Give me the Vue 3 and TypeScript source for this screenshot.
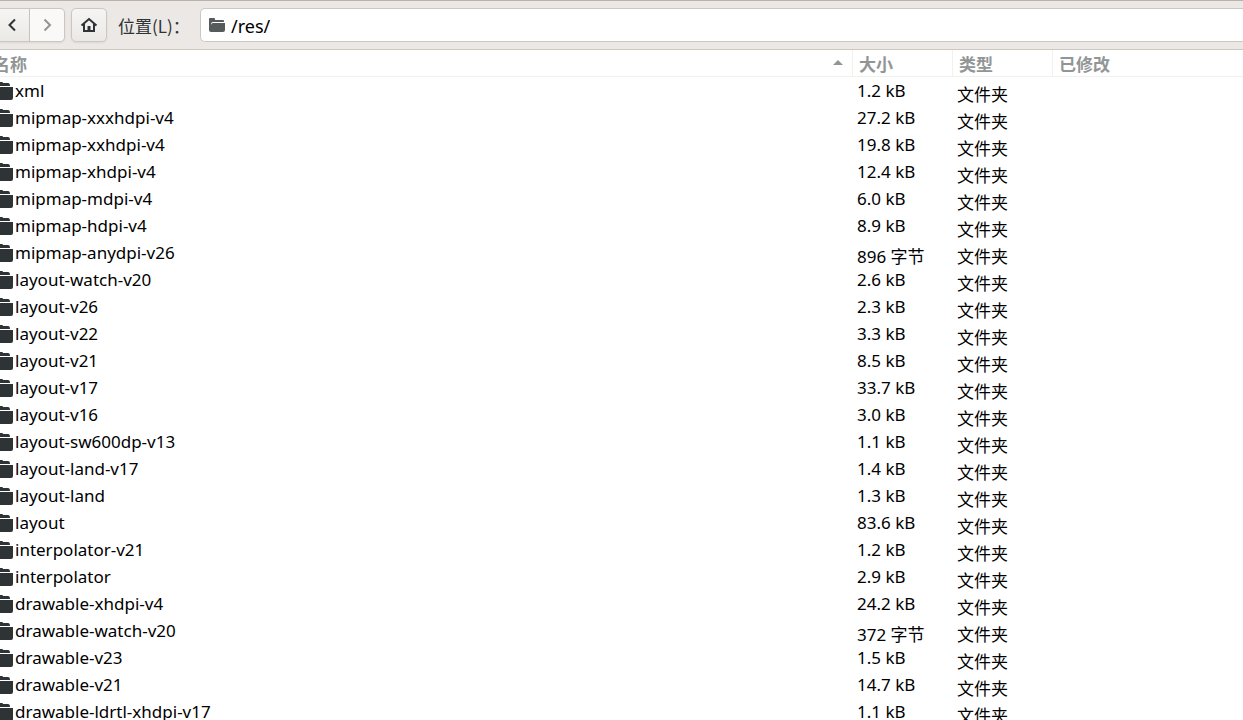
<script setup lang="ts">
import { ref } from 'vue'

interface Entry {
  name: string
  size: string
}

const location = ref('/res/')

const entries: Entry[] = [
  { name: 'xml', size: '1.2 kB' },
  { name: 'mipmap-xxxhdpi-v4', size: '27.2 kB' },
  { name: 'mipmap-xxhdpi-v4', size: '19.8 kB' },
  { name: 'mipmap-xhdpi-v4', size: '12.4 kB' },
  { name: 'mipmap-mdpi-v4', size: '6.0 kB' },
  { name: 'mipmap-hdpi-v4', size: '8.9 kB' },
  { name: 'mipmap-anydpi-v26', size: '896 字节' },
  { name: 'layout-watch-v20', size: '2.6 kB' },
  { name: 'layout-v26', size: '2.3 kB' },
  { name: 'layout-v22', size: '3.3 kB' },
  { name: 'layout-v21', size: '8.5 kB' },
  { name: 'layout-v17', size: '33.7 kB' },
  { name: 'layout-v16', size: '3.0 kB' },
  { name: 'layout-sw600dp-v13', size: '1.1 kB' },
  { name: 'layout-land-v17', size: '1.4 kB' },
  { name: 'layout-land', size: '1.3 kB' },
  { name: 'layout', size: '83.6 kB' },
  { name: 'interpolator-v21', size: '1.2 kB' },
  { name: 'interpolator', size: '2.9 kB' },
  { name: 'drawable-xhdpi-v4', size: '24.2 kB' },
  { name: 'drawable-watch-v20', size: '372 字节' },
  { name: 'drawable-v23', size: '1.5 kB' },
  { name: 'drawable-v21', size: '14.7 kB' },
  { name: 'drawable-ldrtl-xhdpi-v17', size: '1.1 kB' },
]
</script>

<template>
  <div class="window">
    <header class="toolbar">
      <div class="history">
        <button type="button" class="back" aria-label="后退">
          <svg width="16" height="16" viewBox="0 0 16 16"><path d="M11 2.500 5.500 8l5.500 5.500" /></svg>
        </button>
        <button type="button" class="forward" aria-label="前进" disabled>
          <svg width="16" height="16" viewBox="0 0 16 16"><path d="M5.500 2.500 11 8l-5.500 5.500" /></svg>
        </button>
      </div>
      <button type="button" class="home" aria-label="主目录">
        <svg width="18" height="16" viewBox="0 0 18 16">
          <path d="M1.500 8.500 9 2l7.500 6.500M4 7v7h10V7" />
          <path class="solid" d="M7.500 9h3v5h-3z" />
        </svg>
      </button>
      <label class="location-label" for="location">位置(L)：</label>
      <div class="location">
        <svg width="16" height="14" viewBox="0 0 16 14">
          <path d="M1 0h4q1 0 1 1v1h8q1 0 1 1v1H4Q2 4 2 6v8q-2 0-2-2V1q0-1 1-1z" />
          <path d="M4 5h12v7q0 2-2 2H2V6.500Q2.500 5 4 5z" />
        </svg>
        <input id="location" v-model="location" type="text" />
      </div>
    </header>

    <main class="listing">
      <table>
        <colgroup>
          <col />
          <col class="col-size" />
          <col class="col-type" />
          <col class="col-modified" />
        </colgroup>
        <thead>
          <tr>
            <th scope="col" aria-sort="ascending">
              <div class="name-heading">
                <span>名称</span>
                <svg width="10" height="5" viewBox="0 0 10 5"><path d="M5 0l5 5H0z" /></svg>
              </div>
            </th>
            <th scope="col">大小</th>
            <th scope="col">类型</th>
            <th scope="col">已修改</th>
          </tr>
        </thead>
        <tbody>
          <tr v-for="entry in entries" :key="entry.name">
            <td>
              <div class="name">
                <span class="folder">
                  <svg width="18" height="18" viewBox="0 0 18 18">
                    <path d="M3 0h4q1 0 1 1h5q2 0 2 3H1V2q0-2 2-2z" />
                    <path d="M0 5h18v11q0 2-2 2H2q-2 0-2-2z" />
                  </svg>
                </span>
                <span>{{ entry.name }}</span>
              </div>
            </td>
            <td :class="{ lowered: entry.size.endsWith('字节') }">{{ entry.size }}</td>
            <td class="lowered">文件夹</td>
            <td></td>
          </tr>
        </tbody>
      </table>
    </main>
  </div>
</template>

<style>
body {
  margin: 0;
  overflow: hidden;
}
</style>

<style scoped>
.window {
  height: 100vh;
  overflow: hidden;
  background: #fff;
  color: #000;
  font-family: "Noto Sans", "Noto Sans CJK SC", sans-serif;
  font-size: 17px;
}
.toolbar {
  display: flex;
  align-items: center;
  box-sizing: border-box;
  height: 50px;
  padding-bottom: 1px;
  border-top: 1px solid #bdb1a9;
  border-bottom: 1px solid #cdc7c2;
  background: #ebe8e5;
}
.toolbar button {
  display: flex;
  align-items: center;
  justify-content: center;
  box-sizing: border-box;
  height: 34px;
  padding: 0;
  border: 1px solid #cdc7c2;
  background: linear-gradient(#f6f5f3, #ebe9e6);
  box-shadow: 0 1px 2px rgba(0, 0, 0, 0.08);
}
.toolbar button path {
  fill: none;
  stroke: #2e3436;
  stroke-width: 2;
}
.toolbar button .solid {
  fill: #2e3436;
  stroke: none;
}
.history {
  display: flex;
}
.toolbar .back {
  width: 30px;
  padding-right: 6px;
  border-left: 0;
}
.toolbar .forward {
  width: 35px;
  border-left: 0;
  border-radius: 0 5px 5px 0;
  background: #faf9f8;
}
.toolbar .forward path {
  stroke: #929595;
}
.toolbar .home {
  width: 36px;
  margin-left: 6px;
  border-radius: 5px;
}
.location-label {
  flex: none;
  width: 82px;
  padding-top: 2px;
  margin-left: 11px;
  color: #2e3436;
  font-family: "Noto Sans CJK SC", sans-serif;
  line-height: 34px;
  white-space: nowrap;
}
.location {
  display: flex;
  flex: 1;
  align-items: center;
  box-sizing: border-box;
  height: 34px;
  padding-left: 8px;
  border: 1px solid #cdc7c2;
  border-right: 0;
  border-radius: 5px 0 0 5px;
  background: #fff;
}
.location svg {
  flex: none;
  fill: #555a5b;
}
.location input {
  flex: 1;
  min-width: 0;
  padding: 2px 0 0;
  margin-left: 6px;
  border: 0;
  outline: 0;
  background: none;
  color: #000;
  font: inherit;
  font-size: 18px;
}
table {
  width: 100%;
  border-collapse: separate;
  border-spacing: 0;
  table-layout: fixed;
}
.col-size,
.col-type {
  width: 100px;
}
.col-modified {
  width: 190px;
}
th {
  box-sizing: border-box;
  height: 27px;
  padding: 1px 0 0 6px;
  border-right: 1px solid #f1f1f0;
  border-bottom: 1px solid #f1f1f0;
  color: #929595;
  font-family: "Noto Sans CJK SC", sans-serif;
  font-weight: 700;
  line-height: 25px;
  text-align: left;
}
th:first-child {
  padding-left: 0;
}
th:last-child {
  border-right: 0;
}
.name-heading {
  display: flex;
  align-items: center;
  justify-content: space-between;
  padding-right: 9px;
  text-indent: -7px;
}
.name-heading svg {
  margin-bottom: 2px;
  fill: #929595;
}
td {
  box-sizing: border-box;
  height: 27px;
  padding: 0 0 0 4px;
  line-height: 27px;
  vertical-align: top;
  white-space: nowrap;
}
td:first-child {
  padding: 0;
}
td.lowered {
  padding-top: 8px;
  line-height: 19px;
}
.name {
  display: flex;
  height: 27px;
}
.folder {
  display: flex;
  flex: none;
  justify-content: flex-end;
  width: 13px;
  padding-top: 5px;
  margin-right: 2px;
  overflow: hidden;
}
.folder svg {
  flex: none;
  fill: #2e3436;
}
</style>
